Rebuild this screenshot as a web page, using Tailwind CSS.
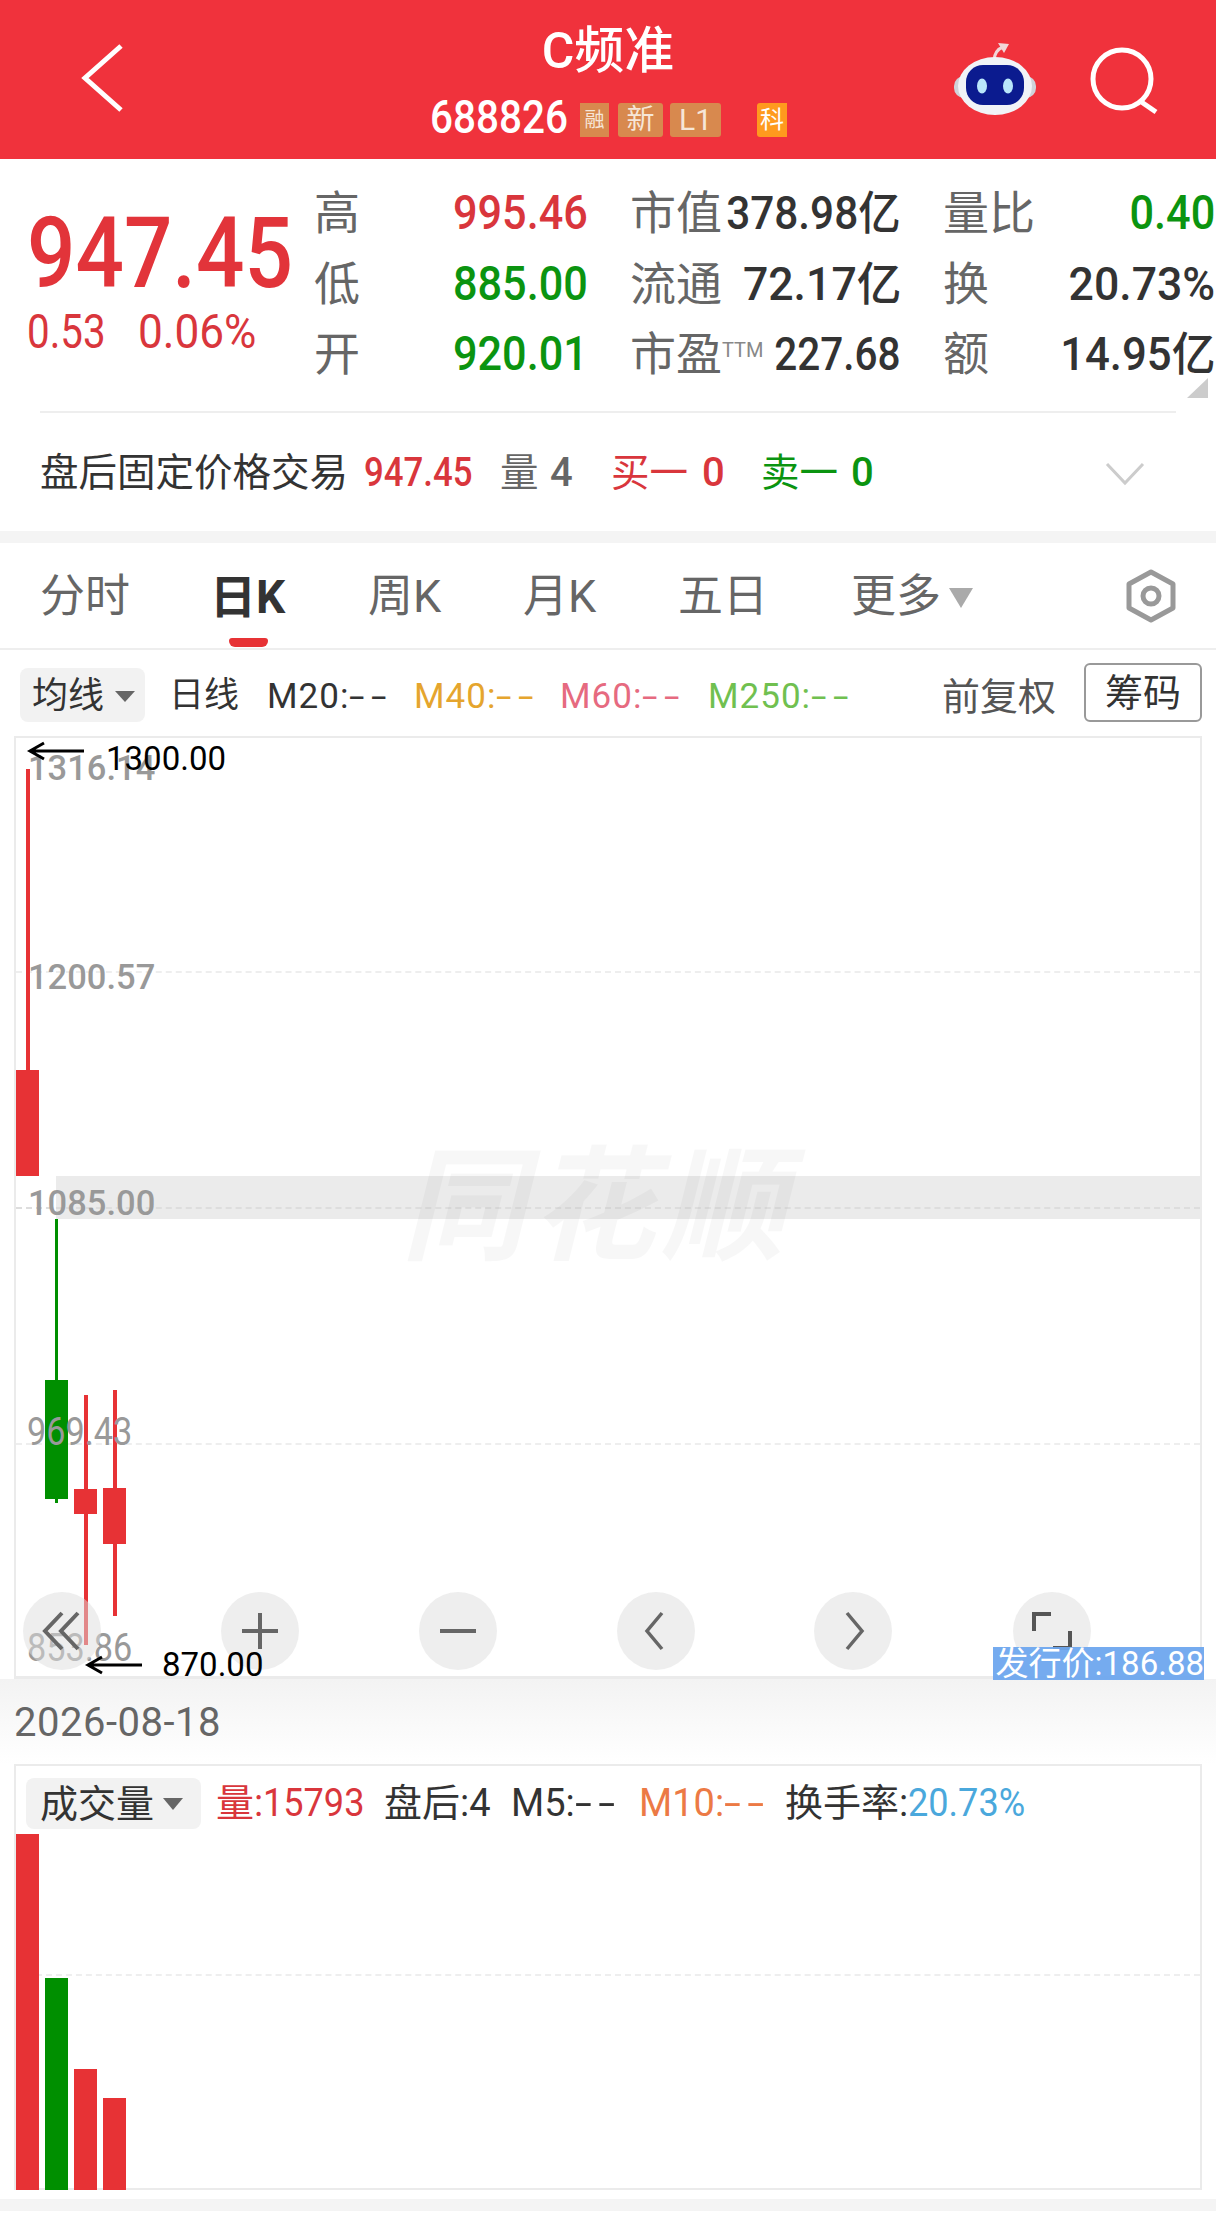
<!DOCTYPE html>
<html lang="zh-CN">
<head>
  <meta charset="UTF-8" />
  <meta name="viewport" content="width=device-width, initial-scale=1.0" />
  <title>C频准 688826</title>
  <script src="https://cdn.jsdelivr.net/npm/@tailwindcss/browser@4"></script>
</head>
<body class="bg-white w-[1216px] h-[2228px] overflow-hidden font-['Roboto','Noto_Sans_CJK_SC',sans-serif] text-[#333]">

  <!-- 顶部标题栏 -->
  <header class="relative h-[159px] bg-[#f0323c] text-white">
    <svg class="absolute left-[80px] top-[42px]" width="46" height="72" viewBox="0 0 46 72" fill="none" stroke="#fff" stroke-width="5"><path d="M41 4 L5 36 L41 68"/></svg>
    <div class="h-[103px] leading-[103px] text-[50px] font-medium text-center">C频准</div>
    <div class="flex items-center h-[34px] ml-[430px] whitespace-nowrap">
      <span class="w-[136px]"><span class="inline-block origin-left scale-x-[.88] text-[46px] leading-[34px] font-medium">688826</span></span>
      <span class="ml-[14px] w-[29px] h-[34px] bg-[#d8894e] text-[20px] leading-[34px] text-center text-[#f6e6d8]">融</span>
      <span class="ml-[9px] w-[45px] h-[34px] rounded-[3px] bg-[#d8894e] text-[28px] leading-[34px] text-center text-[#f6e6d8]">新</span>
      <span class="ml-[7px] w-[51px] h-[34px] rounded-[3px] bg-[#d8894e] text-[30px] leading-[34px] text-center text-[#f6e6d8]">L1</span>
      <span class="ml-[36px] w-[30px] h-[34px] rounded-l-[3px] bg-[#ff9a1e] text-[24px] leading-[34px] text-center">科</span>
    </div>
    <svg class="absolute left-[952px] top-[40px]" width="86" height="78" viewBox="0 0 86 78">
      <path d="M42 20 Q43 10 51 7" fill="none" stroke="#f2d6d8" stroke-width="3"/>
      <path d="M46 3 L57 4 L52 13 Z" fill="#f2d6d8"/>
      <rect x="2" y="36" width="82" height="22" rx="10" fill="#cfd3da"/>
      <ellipse cx="43" cy="46" rx="37" ry="29" fill="#f1f3f7"/>
      <rect x="14" y="25" width="58" height="40" rx="17" fill="#0b1b8f"/>
      <ellipse cx="30" cy="46" rx="5" ry="7.5" fill="#b9e6fb"/>
      <ellipse cx="56" cy="46" rx="5" ry="7.5" fill="#b9e6fb"/>
    </svg>
    <svg class="absolute left-[1090px] top-[46px]" width="72" height="70" viewBox="0 0 72 70" fill="none" stroke="#fff" stroke-width="5"><circle cx="32" cy="33" r="29"/><path d="M50 55 L66 66"/></svg>
  </header>

  <!-- 行情数据 -->
  <section class="relative h-[254px] flex">
    <div class="w-[314px] pl-[27px] pt-[50px] text-[#e2343a] whitespace-nowrap">
      <div class="w-[260px] h-[90px] leading-[90px] text-[98px] font-medium"><span class="inline-block origin-left scale-x-[.87]">947.45</span></div>
      <div class="flex mt-[8px] h-[50px] leading-[50px] text-[48px] text-[#d9363c]">
        <span class="w-[111px]"><span class="inline-block origin-left scale-x-[.84]">0.53</span></span>
        <span class="w-[130px]"><span class="inline-block origin-left scale-x-[.92]">0.06%</span></span>
      </div>
    </div>
    <div class="grid grid-cols-[274px_271px_272px] gap-x-[42px] auto-rows-[70.5px] pt-[19px] h-fit text-[46px] leading-[70px] text-[#666] whitespace-nowrap">
      <div class="flex justify-between"><span>高</span><span class="inline-block origin-right scale-x-[.9] text-[#d9363c] text-[48px] font-medium">995.46</span></div>
      <div class="flex justify-between"><span class="w-0">市值</span><span class="inline-block origin-right scale-x-[.92] text-[#333] text-[46px] font-medium">378.98亿</span></div>
      <div class="flex justify-between"><span>量比</span><span class="inline-block origin-right scale-x-[.9] text-[#0b9410] text-[48px] font-medium">0.40</span></div>

      <div class="flex justify-between"><span>低</span><span class="inline-block origin-right scale-x-[.9] text-[#0b9410] text-[48px] font-medium">885.00</span></div>
      <div class="flex justify-between"><span class="w-0">流通</span><span class="inline-block origin-right scale-x-[.97] text-[#333] text-[46px] font-medium">72.17亿</span></div>
      <div class="flex justify-between"><span>换</span><span class="inline-block origin-right scale-x-[.97] text-[#333] text-[46px] font-medium">20.73%</span></div>

      <div class="flex justify-between"><span>开</span><span class="inline-block origin-right scale-x-[.9] text-[#0b9410] text-[48px] font-medium">920.01</span></div>
      <div class="flex justify-between"><span class="w-0">市盈<span class="relative -top-[13px] text-[20px] text-[#888]">TTM</span></span><span class="inline-block origin-right scale-x-[.88] text-[#333] text-[46px] font-medium">227.68</span></div>
      <div class="flex justify-between"><span>额</span><span class="inline-block origin-right scale-x-[.95] text-[#333] text-[46px] font-medium">14.95亿</span></div>
    </div>
    <div class="absolute left-[1187px] top-[219px] w-0 h-0 border-l-[21px] border-l-transparent border-b-[20px] border-b-[#ccc]"></div>
    <div class="absolute left-[40px] w-[1136px] bottom-0 h-[2px] bg-[#eee]"></div>
  </section>

  <!-- 盘后固定价格 -->
  <section class="relative h-[118px] flex items-center pl-[40px] pt-[2px] text-[38.5px] whitespace-nowrap">
    <span class="w-[324px]">盘后固定价格交易</span>
    <span class="w-[136px] text-[#d9363c] text-[40px] font-medium"><span class="inline-block origin-left scale-x-[.87]">947.45</span></span>
    <span class="text-[#666] w-[50px]">量</span>
    <span class="text-[#666] w-[61px] text-[40px] font-medium">4</span>
    <span class="text-[#d9363c] w-[91px]">买一</span>
    <span class="text-[#d9363c] w-[59px] text-[40px] font-medium">0</span>
    <span class="text-[#0b9410] w-[90px]">卖一</span>
    <span class="text-[#0b9410] text-[40px] font-medium">0</span>
    <svg class="absolute left-[1105px] top-[49px]" width="40" height="24" viewBox="0 0 40 24" fill="none" stroke="#ccc" stroke-width="3"><path d="M2 2 L20 21 L38 2"/></svg>
  </section>
  <div class="h-[12px] bg-[#f4f4f4]"></div>

  <!-- 周期切换 -->
  <nav class="relative h-[107px] border-b-[2px] border-[#eee] text-[45px] text-[#666] leading-[108px]">
    <span class="absolute left-[40px]">分时</span>
    <span class="absolute left-[210px] text-[46px] font-bold text-[#333]">日K</span>
    <span class="absolute left-[368px]">周K</span>
    <span class="absolute left-[523px]">月K</span>
    <span class="absolute left-[678px]">五日</span>
    <span class="absolute left-[851px]">更多</span>
    <span class="absolute left-[949px] top-[45px] w-0 h-0 border-x-[12px] border-x-transparent border-t-[20px] border-t-[#aaa]"></span>
    <svg class="absolute left-[1124px] top-[25px]" width="54" height="56" viewBox="0 0 54 56" fill="none" stroke="#999" stroke-width="5"><path d="M27 4 L49 16 V40 L27 52 L5 40 V16 Z" stroke-linejoin="round"/><circle cx="27" cy="28" r="8"/></svg>
    <span class="absolute left-[229px] top-[95px] w-[39px] h-[9px] rounded-b-[6px] rounded-t-[3px] bg-[#e73235]"></span>
  </nav>

  <!-- 均线 -->
  <div class="relative h-[86px] text-[36px] leading-none whitespace-nowrap">
    <div class="absolute left-[20px] top-[18px] w-[125px] h-[54px] rounded-[8px] bg-[#f2f2f2] flex items-center pl-[12px] pt-[2px]">
      <span>均线</span>
      <span class="ml-[11px] w-0 h-0 border-x-[10px] border-x-transparent border-t-[11px] border-t-[#666]"></span>
    </div>
    <span class="absolute left-[169px] top-[28px] text-[35px]">日线</span>
    <span class="absolute left-[267px] top-[29px] text-[35px] tracking-[1px]">M20:<span class="inline-block origin-left scale-x-[1.6] tracking-[4px]">--</span></span>
    <span class="absolute left-[414px] top-[29px] text-[35px] tracking-[1px] text-[#e5a52e]">M40:<span class="inline-block origin-left scale-x-[1.6] tracking-[4px]">--</span></span>
    <span class="absolute left-[560px] top-[29px] text-[35px] tracking-[1px] text-[#e66a80]">M60:<span class="inline-block origin-left scale-x-[1.6] tracking-[4px]">--</span></span>
    <span class="absolute left-[708px] top-[29px] text-[35px] tracking-[1px] text-[#70c050]">M250:<span class="inline-block origin-left scale-x-[1.6] tracking-[4px]">--</span></span>
    <span class="absolute left-[942px] top-[28px] text-[38px] text-[#555]">前复权</span>
    <span class="absolute left-[1084px] top-[13px] w-[118px] h-[59px] rounded-[6px] border-[2px] border-[#999] text-center leading-[57px] text-[38px]">筹码</span>
  </div>

  <!-- K线图 -->
  <div class="relative ml-[14px] w-[1188px] h-[943px] border-[2px] border-b-[3px] border-[#ebebeb] whitespace-nowrap">
    <div class="absolute left-[40px] right-0 top-[438px] h-[43px] bg-[#ebebeb]"></div>
    <div class="absolute left-0 right-0 top-[233px] border-t-[2px] border-dashed border-[#eee]"></div>
    <div class="absolute left-0 right-0 top-[469px] border-t-[2px] border-dashed border-[#ddd]"></div>
    <div class="absolute left-0 right-0 top-[705px] border-t-[2px] border-dashed border-[#eee]"></div>

    <div class="absolute left-[385px] top-[400px] text-[124px] leading-[140px] font-bold italic text-black/[0.03] tracking-[6px]">同花顺</div>

    <!-- 蜡烛 -->
    <div class="absolute left-[10px] top-[31px] w-[4px] h-[302px] bg-[#e73235]"></div>
    <div class="absolute left-0 top-[332px] w-[23px] h-[106px] bg-[#e73235]"></div>
    <div class="absolute left-[39px] top-[481px] w-[3px] h-[284px] bg-[#008f00]"></div>
    <div class="absolute left-[29px] top-[642px] w-[23px] h-[119px] bg-[#008f00]"></div>
    <div class="absolute left-[68px] top-[657px] w-[4px] h-[250px] bg-[#e73235]"></div>
    <div class="absolute left-[58px] top-[751px] w-[23px] h-[25px] bg-[#e73235]"></div>
    <div class="absolute left-[97px] top-[652px] w-[4px] h-[226px] bg-[#e73235]"></div>
    <div class="absolute left-[87px] top-[750px] w-[23px] h-[56px] bg-[#e73235]"></div>

    <!-- 价格刻度 -->
    <span class="absolute left-[12px] top-[9px] text-[34.5px] leading-[42px] font-medium text-[#999]">1316.14</span>
    <span class="absolute left-[12px] top-[218px] text-[34.5px] leading-[42px] font-medium text-[#999]">1200.57</span>
    <span class="absolute left-[12px] top-[444px] text-[34.5px] leading-[42px] font-medium text-[#999]">1085.00</span>
    <span class="absolute left-[11px] top-[673px] origin-left scale-x-[.9] text-[38px] leading-[42px] text-[#999]">969.43</span>
    <span class="absolute left-[11px] top-[889px] origin-left scale-x-[.9] text-[38px] leading-[42px] text-[#999]">853.86</span>

    <!-- 标注 -->
    <svg class="absolute left-[10px] top-[2px]" width="60" height="24" viewBox="0 0 60 24" fill="none" stroke="#000" stroke-width="3"><path d="M58 11 H4 M18 3 L4 11 L18 19"/></svg>
    <span class="absolute left-[90px] top-[2px] text-[33px] leading-[38px] text-black">1300.00</span>

    <!-- 工具按钮 -->
    <div class="absolute left-[7px] top-[854px] w-[78px] h-[78px] rounded-full bg-[#ddd]/50 flex items-center justify-center">
      <svg width="40" height="40" viewBox="0 0 40 40" fill="none" stroke="#666" stroke-width="4"><path d="M20 2 L3 20 L20 38 M36 2 L19 20 L36 38"/></svg>
    </div>
    <div class="absolute left-[205px] top-[854px] w-[78px] h-[78px] rounded-full bg-[#ddd]/50 flex items-center justify-center">
      <svg width="40" height="40" viewBox="0 0 40 40" fill="none" stroke="#666" stroke-width="4"><path d="M20 2 V38 M2 20 H38"/></svg>
    </div>
    <div class="absolute left-[403px] top-[854px] w-[78px] h-[78px] rounded-full bg-[#ddd]/50 flex items-center justify-center">
      <svg width="40" height="40" viewBox="0 0 40 40" fill="none" stroke="#666" stroke-width="4"><path d="M2 20 H38"/></svg>
    </div>
    <div class="absolute left-[601px] top-[854px] w-[78px] h-[78px] rounded-full bg-[#ddd]/50 flex items-center justify-center">
      <svg width="40" height="40" viewBox="0 0 40 40" fill="none" stroke="#666" stroke-width="3.5"><path d="M26 2 L11 20 L26 38"/></svg>
    </div>
    <div class="absolute left-[798px] top-[854px] w-[78px] h-[78px] rounded-full bg-[#ddd]/50 flex items-center justify-center">
      <svg width="40" height="40" viewBox="0 0 40 40" fill="none" stroke="#666" stroke-width="3.5"><path d="M14 2 L29 20 L14 38"/></svg>
    </div>
    <div class="absolute left-[997px] top-[854px] w-[78px] h-[78px] rounded-full bg-[#ddd]/50 flex items-center justify-center">
      <svg width="40" height="40" viewBox="0 0 40 40" fill="none" stroke="#555" stroke-width="4"><path d="M2 20 V3 H19 M38 20 V37 H21"/></svg>
    </div>

    <svg class="absolute left-[68px] top-[916px]" width="60" height="24" viewBox="0 0 60 24" fill="none" stroke="#000" stroke-width="3"><path d="M58 11 H4 M18 3 L4 11 L18 19"/></svg>
    <span class="absolute left-[146px] top-[908px] text-[33px] leading-[38px] text-black">870.00</span>
    <span class="absolute left-[977px] top-[909px] w-[211px] h-[33px] bg-[#6ea6ee]/95 text-white text-[33px] leading-[33px] text-right">发行价:186.88</span>
  </div>

  <!-- 日期 -->
  <div class="h-[85px] pl-[14px] pt-[21px] bg-gradient-to-b from-[#f3f3f3] to-white text-[40px] leading-[46px] tracking-[.5px] text-[#666] whitespace-nowrap">2026-08-18</div>

  <!-- 成交量 -->
  <div class="relative ml-[14px] w-[1188px] h-[426px] border-[2px] border-[#ebebeb]">
    <div class="absolute left-[10px] top-[12px] w-[175px] h-[51px] rounded-[8px] bg-[#f2f2f2] flex items-center pl-[14px] text-[38px] leading-none">
      <span>成交量</span>
      <span class="ml-[9px] w-0 h-0 border-x-[10px] border-x-transparent border-t-[12px] border-t-[#666]"></span>
    </div>
    <div class="absolute left-[200px] top-[12px] h-[51px] leading-[51px] whitespace-nowrap text-[38px]">
      <span class="absolute left-0 text-[#d9363c]">量:<span class="inline-block origin-left scale-x-[.95]">15793</span></span>
      <span class="absolute left-[168px]">盘后:4</span>
      <span class="absolute left-[295px]">M5:<span class="inline-block origin-left scale-x-[1.6] tracking-[4px]">--</span></span>
      <span class="absolute left-[423px] text-[#ec7a45]">M10:<span class="inline-block origin-left scale-x-[1.6] tracking-[4px]">--</span></span>
      <span class="absolute left-[569px]">换手率:<span class="inline-block origin-left scale-x-[.95] text-[#4aa8dc]">20.73%</span></span>
    </div>
    <div class="absolute left-0 right-0 top-[208px] border-t-[2px] border-dashed border-[#eee]"></div>
    <div class="absolute left-0 top-[68px] w-[23px] h-[356px] bg-[#e73235]"></div>
    <div class="absolute left-[29px] top-[212px] w-[23px] h-[212px] bg-[#008f00]"></div>
    <div class="absolute left-[58px] top-[303px] w-[23px] h-[121px] bg-[#e73235]"></div>
    <div class="absolute left-[87px] top-[332px] w-[23px] h-[92px] bg-[#e73235]"></div>
  </div>

  <div class="mt-[9px] h-[12px] bg-[#f4f4f4]"></div>
</body>
</html>
